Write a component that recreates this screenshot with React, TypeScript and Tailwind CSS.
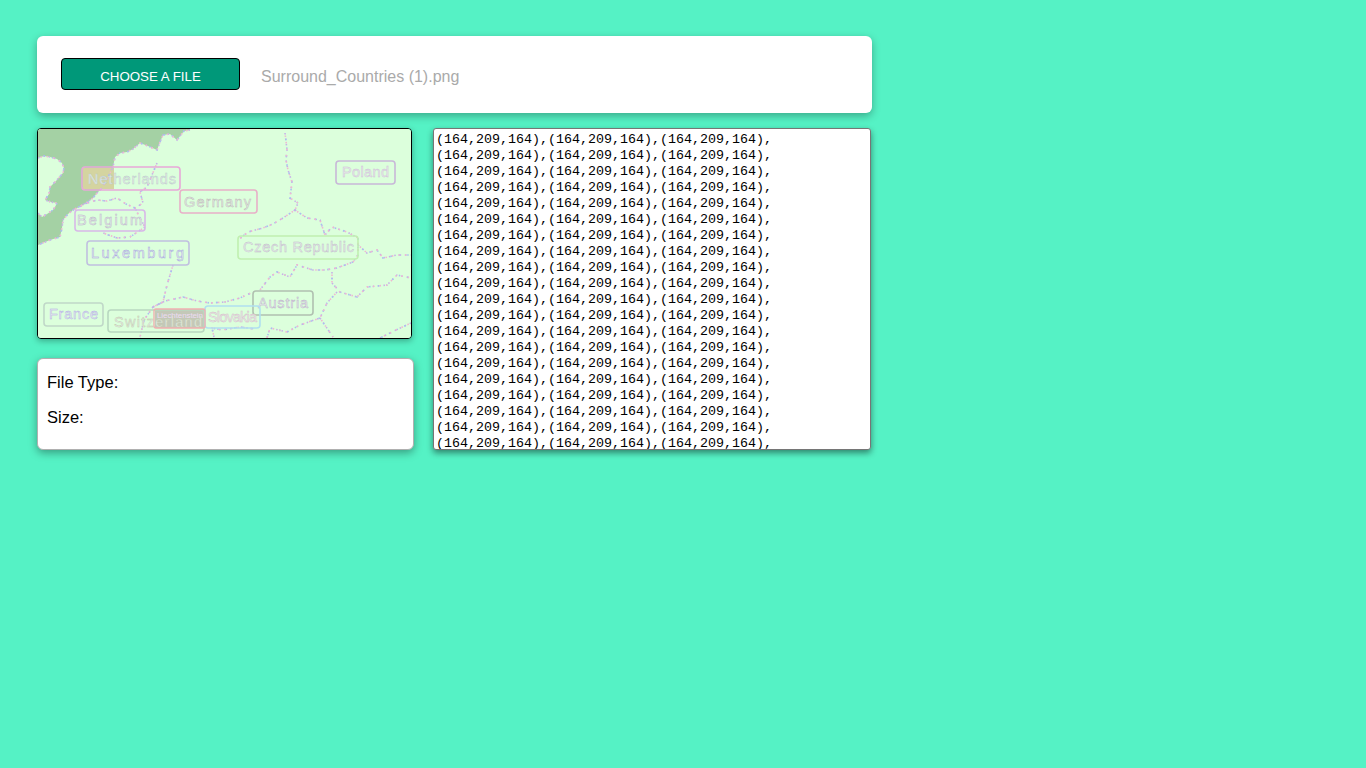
const sans = "font-['Liberation_Sans',Arial,sans-serif]";

// the map picture: an edge filtered map, so borders are drawn as speckled pastel lines
const coast =
  "190,130 184,131 177,140 170,134 163,135 160,142 157,150 148,146 140,143 133,149 127,152 120,153 115,157 114,162 113,167 108,177 102,188 97,193 93,198 83,205 73,210 68,214 63,220 62,228 60,237 50,240 38,245";
const island =
  "38,158 44,156 50,157 57,159 62,163 64,168 63,173 56,181 50,187 49,194 45,200 51,202 57,203 55,207 53,210 47,214 42,217 38,213";

const borders = [
  coast,
  island,
  "285,133 286,141 287,150 286,160 288,170 292,182 290,198 298,203 295,210",
  "295,210 283,218 273,224 263,228 248,232 238,240",
  "295,210 307,218 320,220 325,235 332,227 347,232 358,238 358,245 358,255 353,262 337,268 325,270 313,270 297,265 290,277 277,272 270,277 260,290",
  "358,245 367,253 377,250 383,258 397,255 412,255",
  "332,272 332,283 340,292 357,297 367,287 387,285 397,275 411,278",
  "337,292 327,303 320,318 300,325 287,332 270,328 267,338",
  "320,318 333,337",
  "411,323 396,330 380,338",
  "157,163 152,175 147,187 140,192 143,203 135,208 140,218 145,227 130,237 117,238 103,233",
  "73,210 84,204 97,200 107,201 117,198 126,204 135,208",
  "173,265 170,275 167,285 163,302 153,307 144,320 140,337",
  "153,307 165,301 183,297 197,301 210,303 225,302 240,298 253,292",
  "214,337 212,328 222,330 240,327 255,329",
];

const labels = [
  { name: "Netherlands", x: 82, y: 167, w: 98, h: 23, t: 88, l: 88, b: 184, c: "#e8a8d8", f: "#b8c8c8" },
  { name: "Germany", x: 180, y: 190, w: 77, h: 23, t: 184, l: 67, b: 207, c: "#e8b0c8", f: "#b8b0b0" },
  { name: "Belgium", x: 75, y: 210, w: 70, h: 21, t: 77, l: 65, b: 225, c: "#d8b8e8", f: "#b8b0c8" },
  { name: "Luxemburg", x: 87, y: 241, w: 102, h: 24, t: 91, l: 93, b: 258, c: "#c0c0e0", f: "#a0a0e0" },
  { name: "Czech Republic", x: 238, y: 236, w: 120, h: 23, t: 243, l: 111, b: 252, c: "#c0f0b0", f: "#c0b8c8" },
  { name: "Poland", x: 336, y: 161, w: 59, h: 23, t: 342, l: 47, b: 177, c: "#c8b8d8", f: "#d0b8d8" },
  { name: "Austria", x: 253, y: 291, w: 60, h: 24, t: 258, l: 50, b: 308, c: "#b0c0b0", f: "#b8a8c8" },
  { name: "France", x: 44, y: 303, w: 59, h: 23, t: 49, l: 49, b: 319, c: "#c0d8c8", f: "#b0a8e8" },
  { name: "Switzerland", x: 108, y: 310, w: 96, h: 22, t: 114, l: 88, b: 327, c: "#b8d8c0", f: "#c0c8a8" },
  { name: "Slovakia", x: 205, y: 306, w: 55, h: 22, t: 208, l: 49, b: 322, c: "#b0e0f0", f: "#d8b8c8" },
];

const MapPicture = () => {
  return (
    <svg viewBox="38 129 373 209" className="block w-full h-full">
      <rect x="38" y="129" width="373" height="209" fill="#dcffdc" />
      <polygon points={`38,129 190,129 ${coast} 38,245`} fill="#a4d1a4" />
      <polygon points={island} fill="#dcffdc" />
      <rect x="83" y="168" width="31" height="21" fill="#d4d4a0" />
      <rect x="155" y="309" width="50" height="19" fill="#c4c8b8" />
      {borders.map((b, i) => (
        <g key={i} fill="none" strokeWidth="1.6">
          <polyline points={b} stroke="#c8b0e8" strokeDasharray="1.5 4" />
          <polyline points={b} stroke="#a8c0f0" strokeDasharray="1.5 7" strokeDashoffset="2.5" />
          <polyline points={b} stroke="#f0b8d0" strokeDasharray="1.5 5" strokeDashoffset="4" />
        </g>
      ))}
      {labels.map((l) => (
        <g key={l.name}>
          <rect x={l.x} y={l.y} width={l.w} height={l.h} rx="3" fill="none" stroke={l.c} strokeWidth="1.6" />
          <text
            x={l.t}
            y={l.b}
            fill="#e4ece8"
            stroke={l.f}
            strokeWidth="0.4"
            fontFamily="'Liberation Sans', Arial, sans-serif"
            fontSize="14.5"
            textLength={l.l}
          >
            {l.name}
          </text>
        </g>
      ))}
      <rect x="154" y="309" width="51" height="19" rx="2" fill="none" stroke="#f0b0b0" strokeWidth="1.4" />
      <text
        x="157"
        y="318"
        fill="#ecdcf4"
        fontFamily="'Liberation Sans', Arial, sans-serif"
        fontSize="8"
        textLength="46"
      >
        Liechtenstein
      </text>
    </svg>
  );
};

const App = () => {
  return (
    <div className={`${sans} min-h-screen bg-[#55f2c5] pt-9 pl-[37px]`}>
      <div className="w-[835px] h-[77px] bg-white rounded-md shadow-[0_3px_8px_rgba(0,0,0,0.3)] pt-[22px] pl-6 flex">
        <button className="w-[179px] h-8 pt-[6px] bg-[#009879] border border-black rounded text-[13.333px] text-white">
          CHOOSE A FILE
        </button>
        <span className="ml-[21px] mt-[9px] text-[16px] leading-[20px] text-[#aaaaaa]">
          Surround_Countries (1).png
        </span>
      </div>

      <div className="flex mt-[15px]">
        <div className="w-[377px]">
          <div className="w-[375px] h-[211px] border border-black rounded overflow-hidden shadow-[0_2px_6px_rgba(0,0,0,0.3)]">
            <MapPicture />
          </div>
          <div className="mt-[19px] h-[92px] bg-white border border-[#b0b0b0] rounded-md shadow-[0_3px_8px_rgba(0,0,0,0.35)] pt-[14px] pl-[9px] text-[16.5px] leading-[18px] text-black">
            <p>File Type:</p>
            <p className="mt-[17px]">Size:</p>
          </div>
        </div>
        <textarea
          readOnly
          className="block ml-[19px] w-[438px] h-[322px] bg-white border border-[#767676] rounded-[3px] shadow-[0_3px_6px_rgba(0,0,0,0.45)] overflow-hidden resize-none outline-none px-0.5 pt-[3px] font-['Liberation_Mono','Courier_New',monospace] text-[13.333px] leading-[16px] text-black"
          value={"(164,209,164),".repeat(90)}
        />
      </div>
    </div>
  );
};
export default App;
